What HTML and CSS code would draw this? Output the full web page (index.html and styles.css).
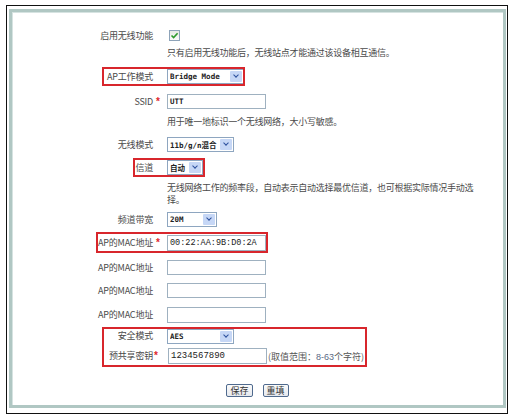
FILE: index.html
```html
<!DOCTYPE html>
<html lang="zh-CN">
<head>
<meta charset="UTF-8">
<title>无线基本设置</title>
<link rel="stylesheet" href="styles.css">
</head>
<body>
<div class="frame">
    <div class="panel">
        <div class="form">
            <div class="row">
                <span class="label">启用无线功能</span><span class="star"></span>
                <span class="check">
                    <svg width="9" height="9" viewBox="0 0 9 9"><path d="M1.5 4.5 L3.6 6.6 L7.6 2.2" fill="none" stroke="#2c9a2c" stroke-width="1.6"/></svg>
                </span>
            </div>
            <div class="hint hint-top">只有启用无线功能后，无线站点才能通过该设备相互通信。</div>

            <div class="row mt6 mark mark-mode">
                <span class="label">AP工作模式</span><span class="star"></span>
                <span class="select sel-mode"><span class="val">Bridge Mode</span><span class="arrow"></span></span>
            </div>

            <div class="row mt2">
                <span class="label">SSID</span><span class="star">*</span>
                <span class="input in-bold">UTT</span>
            </div>
            <div class="hint">用于唯一地标识一个无线网络，大小写敏感。</div>

            <div class="row mt5">
                <span class="label">无线模式</span><span class="star"></span>
                <span class="select sel-wmode"><span class="val">11b/g/n混合</span><span class="arrow"></span></span>
            </div>

            <div class="row mark mark-chan">
                <span class="label">信道</span><span class="star"></span>
                <span class="select sel-chan"><span class="val">自动</span><span class="arrow"></span></span>
            </div>
            <div class="hint hint-wrap">无线网络工作的频率段，自动表示自动选择最优信道，也可根据实际情况手动选择。</div>

            <div class="row mt2">
                <span class="label">频道带宽</span><span class="star"></span>
                <span class="select sel-bw"><span class="val">20M</span><span class="arrow"></span></span>
            </div>

            <div class="row mark mark-mac">
                <span class="label">AP的MAC地址</span><span class="star">*</span>
                <span class="input in-tall in-mono">00:22:AA:9B:D0:2A</span>
            </div>
            <div class="row mt2">
                <span class="label">AP的MAC地址</span><span class="star"></span>
                <span class="input"></span>
            </div>
            <div class="row">
                <span class="label">AP的MAC地址</span><span class="star"></span>
                <span class="input"></span>
            </div>
            <div class="row mt1">
                <span class="label">AP的MAC地址</span><span class="star"></span>
                <span class="input in-tall"></span>
            </div>

            <div class="group mark mark-sec">
                <div class="row row-short">
                    <span class="label">安全模式</span><span class="star"></span>
                    <span class="select sel-wmode"><span class="val">AES</span><span class="arrow"></span></span>
                </div>
                <div class="row row-short">
                    <span class="label">预共享密钥</span><span class="star star-near">*</span>
                    <span class="input in-key">1234567890</span>
                    <span class="range">(取值范围：<span class="num">8-63</span>个字符)</span>
                </div>
            </div>

            <div class="buttons">
                <button class="btn">保存</button>
                <button class="btn">重填</button>
            </div>
        </div>
    </div>
</div>
</body>
</html>
```

FILE: styles.css
```css
/* page frame */
body {
    margin: 0;
    background: #fff;
    font-family: "Noto Sans CJK SC", "Noto Sans", sans-serif;
    font-size: 9px;
    color: #4a4a4a;
}

.frame {
    margin: 5px 0 0 6px;
    width: 502px;
    height: 409px;
    box-sizing: border-box;
    border: 1px solid #111;
    padding: 3px 1px 5px 2px;
}

.panel {
    height: 100%;
    box-sizing: border-box;
    border: 3px solid #b0c7c3;
    box-shadow: inset 1px 1px 0 #d6e3e1;
}

.form {
    display: flex;
    flex-direction: column;
    padding-top: 12px;
}

/* rows */
.row {
    display: flex;
    align-items: center;
    height: 23px;
    flex-shrink: 0;
}

.row-short {
    height: 20px;
}

.mt1 { margin-top: 1px; }
.mt2 { margin-top: 2px; }
.mt5 { margin-top: 5px; }
.mt6 { margin-top: 6px; }

.label {
    width: 141px;
    text-align: right;
    white-space: nowrap;
    line-height: 12px;
    letter-spacing: -0.2px;
}

.star {
    width: 14px;
    padding-left: 3px;
    box-sizing: border-box;
    color: #e0262b;
    font-family: "Liberation Sans", sans-serif;
    font-weight: bold;
    font-size: 10px;
    line-height: 10px;
}

.star-near {
    padding-left: 1px;
}

.hint {
    margin: 3px 0 0 155px;
    line-height: 12px;
    color: #4a4a4a;
    letter-spacing: -0.25px;
}

.hint-top {
    margin-top: 0;
}

.hint-wrap {
    width: 310px;
}

/* checkbox */
.check {
    margin-left: 2px;
    width: 11px;
    height: 11px;
    box-sizing: border-box;
    border: 1px solid #8da3b9;
    background: linear-gradient(#e6e9e4, #fafafa);
    display: flex;
    align-items: center;
    justify-content: center;
}

/* select boxes */
.select {
    display: flex;
    align-items: center;
    height: 15px;
    box-sizing: border-box;
    border: 1px solid #8ea6c0;
    background: #fff;
    padding: 0 1px 0 2px;
}

.sel-mode { width: 77px; }
.sel-wmode { width: 67px; }
.sel-chan { width: 36px; }
.sel-bw { width: 50px; }

.val {
    flex: 1;
    font-family: "DejaVu Sans Mono", "Noto Sans CJK SC", monospace;
    font-weight: bold;
    font-size: 7.5px;
    color: #222;
    white-space: nowrap;
    overflow: hidden;
}

.arrow {
    width: 12px;
    height: 11px;
    background: #c6d7f6;
    border-radius: 1px;
    position: relative;
}

.arrow::after {
    content: "";
    position: absolute;
    left: 4px;
    top: 2px;
    width: 3px;
    height: 3px;
    border-right: 1.5px solid #2b4f9c;
    border-bottom: 1.5px solid #2b4f9c;
    transform: rotate(45deg);
}

/* text inputs */
.input {
    width: 99px;
    height: 15px;
    box-sizing: border-box;
    border: 1px solid #9fb1c0;
    padding-left: 2px;
    display: flex;
    align-items: center;
    font-family: "Liberation Mono", monospace;
    font-size: 9px;
    color: #222;
}

.in-tall {
    height: 16px;
}

.in-bold {
    font-family: "DejaVu Sans Mono", monospace;
    font-weight: bold;
    font-size: 7.5px;
}

.in-mono {
    font-size: 8.5px;
}

.in-key {
    margin-left: 1px;
    height: 16px;
}

.range {
    margin-left: 1px;
    color: #555;
    white-space: nowrap;
}

.range .num {
    font-family: "Liberation Sans", sans-serif;
    color: #5a6a86;
}

/* red annotation boxes */
.mark {
    position: relative;
}

.mark::after {
    content: "";
    position: absolute;
    box-sizing: border-box;
    border: 2px solid #d8262c;
}

.mark-mode::after { left: 90px; top: 2px; width: 143px; height: 19px; }
.mark-chan::after { left: 121px; top: 2px; width: 72px; height: 19px; }
.mark-mac::after { left: 84px; top: 1px; width: 172px; height: 21px; }
.mark-sec::after { left: 90px; top: 1px; width: 265px; height: 40px; }

/* buttons */
.buttons {
    display: flex;
    justify-content: center;
    gap: 10px;
    margin-top: 18px;
}

.btn {
    height: 13px;
    padding: 0 3px;
    border: 1px solid #4f6a8e;
    border-radius: 2px;
    background: linear-gradient(#fbfbfb, #e6e9ee);
    font-family: "Noto Sans CJK SC", sans-serif;
    font-size: 9px;
    line-height: 11px;
    color: #333;
}
```
